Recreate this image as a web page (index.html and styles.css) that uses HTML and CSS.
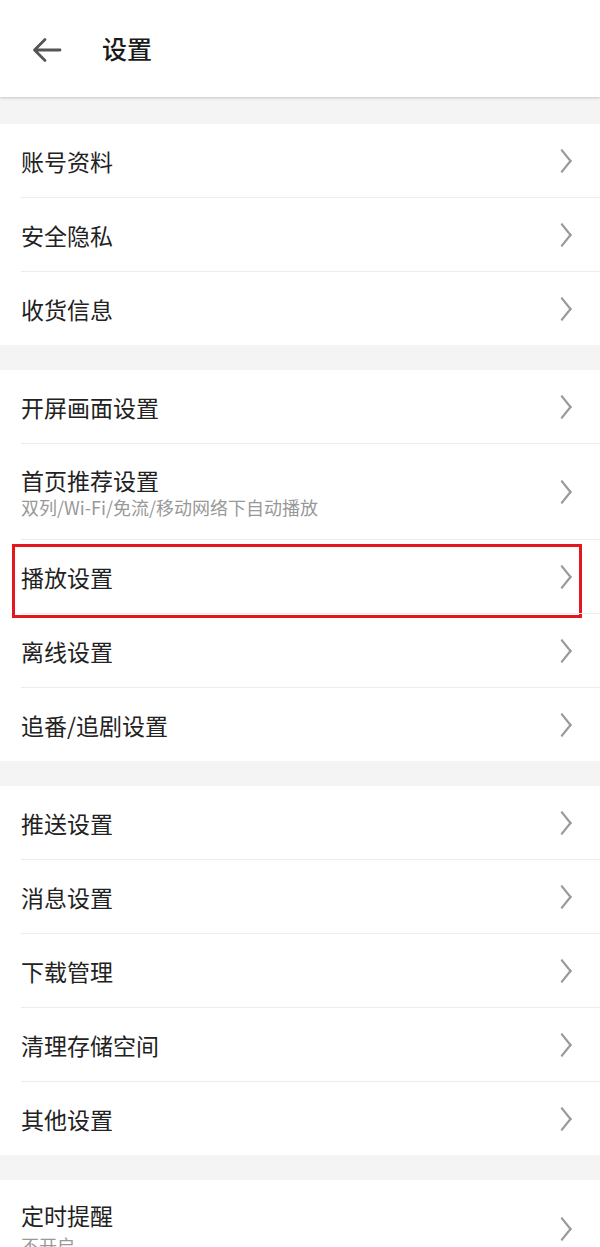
FILE: index.html
```html
<!DOCTYPE html>
<html lang="zh-CN">
<head>
<meta charset="utf-8">
<title>设置</title>
<link rel="stylesheet" href="styles.css">
</head>
<body>
<header class="topbar">
  <svg class="back" width="30" height="26" viewBox="0 0 30 26" aria-hidden="true">
    <path d="M28 13H3M13 2.5L2.5 13L13 23.5" fill="none" stroke="#555" stroke-width="2.8" stroke-linecap="round" stroke-linejoin="round"/>
  </svg>
  <h1 class="title">设置</h1>
</header>

<main class="content">
  <section class="group">
    <div class="row"><span class="label">账号资料</span><span class="chev"></span></div>
    <div class="row"><span class="label">安全隐私</span><span class="chev"></span></div>
    <div class="row"><span class="label">收货信息</span><span class="chev"></span></div>
  </section>

  <section class="group">
    <div class="row"><span class="label">开屏画面设置</span><span class="chev"></span></div>
    <div class="row tall">
      <div class="texts"><span class="label">首页推荐设置</span><span class="sub">双列/Wi-Fi/免流/移动网络下自动播放</span></div>
      <span class="chev"></span>
    </div>
    <div class="row marked"><span class="label">播放设置</span><span class="chev"></span><span class="highlight"></span></div>
    <div class="row"><span class="label">离线设置</span><span class="chev"></span></div>
    <div class="row"><span class="label">追番/追剧设置</span><span class="chev"></span></div>
  </section>

  <section class="group">
    <div class="row"><span class="label">推送设置</span><span class="chev"></span></div>
    <div class="row"><span class="label">消息设置</span><span class="chev"></span></div>
    <div class="row"><span class="label">下载管理</span><span class="chev"></span></div>
    <div class="row"><span class="label">清理存储空间</span><span class="chev"></span></div>
    <div class="row"><span class="label">其他设置</span><span class="chev"></span></div>
  </section>

  <section class="group">
    <div class="row tall last">
      <div class="texts"><span class="label">定时提醒</span><span class="sub">不开启</span></div>
      <span class="chev"></span>
    </div>
  </section>
</main>
</body>
</html>
```

FILE: styles.css
```css
* { box-sizing: border-box; }
html, body { margin: 0; padding: 0; }
body {
  width: 600px;
  height: 1247px;
  overflow: hidden;
  background: #f4f4f4;
  font-family: "Noto Sans CJK SC", "Noto Sans", sans-serif;
  color: #222;
}
.topbar {
  height: 97px;
  background: #fff;
  display: flex;
  align-items: center;
  padding-left: 32px;
  gap: 40px;
  box-shadow: 0 1px 2px rgba(0,0,0,0.12), 0 2px 3px rgba(0,0,0,0.05);
  position: relative;
  z-index: 1;
}
.back { display: block; margin-top: 2px; }
.title {
  margin: 0;
  font-size: 25px;
  font-weight: 500;
  color: #1a1a1a;
  line-height: 1;
}
.content {
  padding-top: 27px;
  display: flex;
  flex-direction: column;
  gap: 25px;
}
.group {
  background: #fff;
  padding-left: 21px;
}
.row {
  height: 73px;
  display: flex;
  align-items: center;
  justify-content: space-between;
  padding-right: 27px;
  position: relative;
}
.row + .row {
  border-top: 1px solid #ececec;
  height: 74px;
}
.row.tall { height: 95px; }
.row + .row.tall { height: 96px; }
.row.last { align-items: flex-start; padding-top: 20px; }
.row.last .chev { margin-top: 22px; }
.row.last .sub { margin-top: 4px; }
.label {
  font-size: 23px;
  line-height: 30px;
  color: #222;
}
.texts {
  display: flex;
  flex-direction: column;
}
.sub {
  font-size: 18px;
  line-height: 22px;
  color: #999;
  margin-top: 1px;
}
.chev {
  width: 14px;
  height: 14px;
  border-top: 2px solid #9a9a9a;
  border-right: 2px solid #9a9a9a;
  transform: scaleY(1.25) rotate(45deg);
  margin-right: 4px;
  flex: none;
}
.highlight {
  position: absolute;
  left: -9px;
  top: 4px;
  width: 570px;
  height: 74px;
  border: 3px solid #e5161d;
  pointer-events: none;
}
```
